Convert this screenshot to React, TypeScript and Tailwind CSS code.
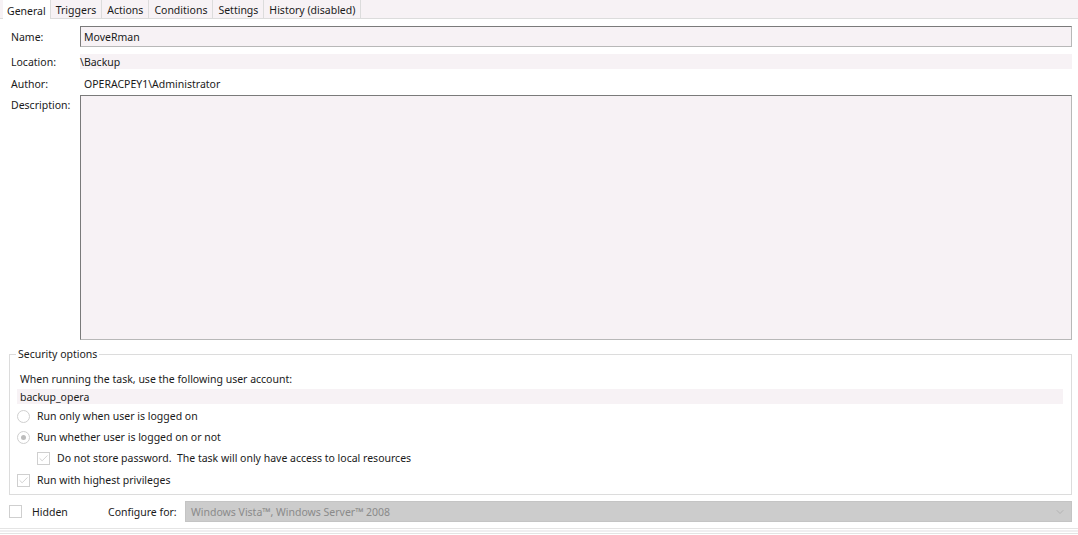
import { Check, ChevronDown } from 'lucide-react'

const font = { fontFamily: '"Noto Sans", "Open Sans", sans-serif' }

const tabs = ['General', 'Triggers', 'Actions', 'Conditions', 'Settings', 'History (disabled)']

function Radio({ on }: { on?: boolean }) {
  return (
    <span className="flex h-[13px] w-[13px] shrink-0 items-center justify-center rounded-full border border-[#cfcfcf] bg-white">
      {on && <span className="h-[5px] w-[5px] rounded-full bg-[#bdbdbd]" />}
    </span>
  )
}

function Box({ on }: { on?: boolean }) {
  return (
    <span className="flex h-[13px] w-[13px] shrink-0 items-center justify-center border border-[#cfcfcf] bg-white">
      {on && <Check size={11} strokeWidth={1.3} className="text-[#b4b4b4]" />}
    </span>
  )
}

function Row({ label, children }: { label: string; children: React.ReactNode }) {
  return (
    <div className="flex items-center">
      <span className="w-[69px] shrink-0">{label}</span>
      {children}
    </div>
  )
}

export default function App() {
  return (
    <div className="h-[535px] w-[1078px] overflow-hidden bg-white text-[10.5px] leading-[14px] text-[#1a1a1a]" style={font}>
      {/* tab strip */}
      <div className="flex h-[19px] items-end border-b border-[#dcdcdc] bg-[#f7f2f5] pl-[3px]">
        {tabs.map((t, i) => (
          <div
            key={t}
            className={
              i === 0
                ? 'relative -mb-px flex h-[19px] items-center bg-white px-[4px] pt-[2px]'
                : 'flex h-[18px] items-center border-l border-[#dcdcdc] px-[5px] pt-px'
            }
          >
            {t}
          </div>
        ))}
        <div className="h-[18px] border-l border-[#dcdcdc]" />
      </div>

      <div className="flex flex-col pl-[11px] pr-[6px] pt-[7px]">
        <Row label="Name:">
          <div className="flex h-[21px] flex-1 items-center border border-[#7a7a7a] border-b-[#b8b8b8] border-r-[#b8b8b8] bg-[#f7f2f5] px-[3px]">
            MoveRman
          </div>
        </Row>
        <div className="mt-[7px]">
          <Row label="Location:">
            <div className="flex h-[15px] flex-1 items-center bg-[#f7f2f5]">\Backup</div>
          </Row>
        </div>
        <div className="mt-[7px]">
          <Row label="Author:">
            <div className="flex h-[15px] flex-1 items-center pl-[4px]">OPERACPEY1\Administrator</div>
          </Row>
        </div>
        <div className="mt-[4px] flex">
          <span className="w-[69px] shrink-0 pt-[3px]">Description:</span>
          <div className="h-[245px] flex-1 border border-[#7a7a7a] border-b-[#b8b8b8] border-r-[#b8b8b8] bg-[#f7f2f5]" />
        </div>
      </div>

      {/* security options group */}
      <div className="ml-[9px] mr-[6px] mt-[14px] border border-[#dcdcdc] pb-[7px]">
        <div className="-mt-[8px] ml-[6px] w-fit bg-white px-[2px]">Security options</div>
        <div className="flex flex-col px-[7px]">
          <div className="mt-[11px] pl-[3px]">When running the task, use the following user account:</div>
          <div className="mr-[1px] mt-[3px] flex h-[15px] items-center bg-[#f7f2f5] pl-[3px]">backup_opera</div>
          <div className="mt-[5px] flex h-[14px] items-center gap-[7px]">
            <Radio />
            <span>Run only when user is logged on</span>
          </div>
          <div className="mt-[7px] flex h-[14px] items-center gap-[7px]">
            <Radio on />
            <span>Run whether user is logged on or not</span>
          </div>
          <div className="ml-[20px] mt-[7px] flex h-[14px] items-center gap-[7px]">
            <Box on />
            <span>Do not store password.&nbsp; The task will only have access to local resources</span>
          </div>
          <div className="mt-[8px] flex h-[14px] items-center gap-[7px]">
            <Box on />
            <span>Run with highest privileges</span>
          </div>
        </div>
      </div>

      {/* bottom row */}
      <div className="ml-[9px] mr-[6px] mt-[6px] flex items-center">
        <Box />
        <span className="ml-[10px] w-[76px]">Hidden</span>
        <span className="w-[77px]">Configure for:</span>
        <div className="flex h-[21px] flex-1 items-center justify-between border border-[#c4c4c4] bg-[#cccccc] px-[5px] text-[#8a8a8a]">
          <span>Windows Vista™, Windows Server™ 2008</span>
          <ChevronDown size={12} strokeWidth={1} className="text-[#9a9a9a]" />
        </div>
      </div>

      <div className="mt-[6px] h-px bg-[#e4e4e4]" />
      <div className="mt-[1px] h-[2px] bg-[#f0eef0]" />
      <div className="mt-[1px] h-px bg-[#e4e4e4]" />
    </div>
  )
}
